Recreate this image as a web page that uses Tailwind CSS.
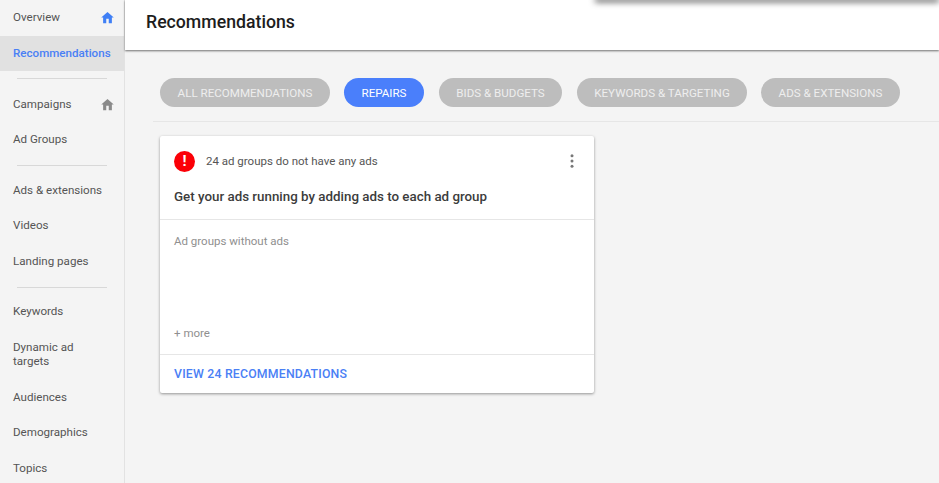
<!DOCTYPE html>
<html lang="en">
  <head>
    <meta charset="UTF-8" />
    <title>Recommendations</title>
    <script src="https://cdn.jsdelivr.net/npm/@tailwindcss/browser@4"></script>
  </head>
  <body class="bg-[#f4f4f4] font-[Roboto,sans-serif] overflow-hidden">
    <div class="flex h-[483px] w-[939px] overflow-hidden">
      <!-- Sidebar -->
      <nav class="w-[125px] shrink-0 h-full border-r border-[#e2e2e2] text-[11.6px] text-[#555]">
        <div class="h-[36px] flex items-center justify-between pl-[13px] pr-[9.5px] pb-[1px]">
          <span>Overview</span>
          <svg class="w-[15px] h-[15px]" viewBox="0 0 24 24" fill="#3f7ff5"><path d="M10 21v-7h4v7h5v-9h3L12 3 2 12h3v9z" /></svg>
        </div>
        <div class="h-[35px] flex items-center pl-[13px] bg-[#e1e1e1] text-[#4a80f5] font-medium">Recommendations</div>
        <div class="mx-[17px] mt-[7px] border-t border-[#d8d8d8]"></div>
        <div class="h-[36px] mt-[7px] pt-[1px] flex items-center justify-between pl-[13px] pr-[9.5px]">
          <span>Campaigns</span>
          <svg class="w-[15px] h-[15px]" viewBox="0 0 24 24" fill="#8a8a8a"><path d="M10 21v-7h4v7h5v-9h3L12 3 2 12h3v9z" /></svg>
        </div>
        <div class="h-[35px] flex items-center pl-[13px]">Ad Groups</div>
        <div class="mx-[17px] mt-[8px] border-t border-[#d8d8d8]"></div>
        <div class="h-[36px] mt-[6px] pt-[1px] flex items-center pl-[13px]">Ads &amp; extensions</div>
        <div class="h-[35px] flex items-center pl-[13px]">Videos</div>
        <div class="h-[36px] pt-[1px] flex items-center pl-[13px]">Landing pages</div>
        <div class="mx-[17px] mt-[8px] border-t border-[#d8d8d8]"></div>
        <div class="h-[35px] mt-[6px] flex items-center pl-[13px]">Keywords</div>
        <div class="h-[50px] flex items-center pl-[13px] leading-[14.5px]">Dynamic ad<br />targets</div>
        <div class="h-[36px] pt-[1px] flex items-center pl-[13px]">Audiences</div>
        <div class="h-[35px] flex items-center pl-[13px]">Demographics</div>
        <div class="h-[36px] pt-[1px] flex items-center pl-[13px]">Topics</div>
      </nav>

      <main class="flex-1 min-w-0 relative">
        <!-- Header -->
        <header class="h-[50px] bg-white shadow-[0_1px_2px_rgba(0,0,0,0.55)] flex items-center pl-[21px] pb-[6px] text-[17.7px] font-medium text-[#1d1d1d]">Recommendations</header>
        <div class="absolute top-[-4px] left-[470px] right-0 h-[4px] shadow-[0_2px_6px_rgba(0,0,0,0.7)]"></div>

        <!-- Filter chips -->
        <div class="ml-[28px] mt-[28px] pl-[7px] h-[44px] border-b border-[#e6e6e6] flex gap-[15px] text-[11.6px] text-[#eeeeee]">
          <span class="h-[29px] w-[170px] pt-[2px] rounded-full bg-[#bdbdbd] flex items-center justify-center">ALL RECOMMENDATIONS</span>
          <span class="h-[29px] w-[80px] pt-[2px] -ml-[1px] rounded-full bg-[#4a7ffb] text-white flex items-center justify-center">REPAIRS</span>
          <span class="h-[29px] w-[123px] pt-[2px] rounded-full bg-[#bdbdbd] flex items-center justify-center">BIDS &amp; BUDGETS</span>
          <span class="h-[29px] w-[170px] pt-[2px] rounded-full bg-[#bdbdbd] flex items-center justify-center">KEYWORDS &amp; TARGETING</span>
          <span class="h-[29px] w-[139px] pt-[2px] -ml-[1px] rounded-full bg-[#bdbdbd] flex items-center justify-center">ADS &amp; EXTENSIONS</span>
        </div>

        <!-- Card -->
        <section class="ml-[35px] mt-[14px] w-[434px] h-[257px] bg-white rounded-[2px] shadow-[0_1px_3px_rgba(0,0,0,0.4)] flex flex-col">
          <div class="h-[84px] border-b border-[#e6e6e6] px-[14px] pt-[14px]">
            <div class="flex items-center h-[22px]">
              <span class="w-[21px] h-[21px] rounded-full bg-[#fb0007] text-white flex items-center justify-center text-[15px] font-bold leading-none">!</span>
              <span class="ml-[11px] mt-[1px] text-[11.5px] text-[#555]">24 ad groups do not have any ads</span>
              <svg class="ml-auto mr-[6px] w-[4px] h-[14px]" viewBox="0 0 4 14" fill="#777"><circle cx="2" cy="1.7" r="1.5" /><circle cx="2" cy="7" r="1.5" /><circle cx="2" cy="12.3" r="1.5" /></svg>
            </div>
            <p class="mt-[15px] text-[13.35px] font-medium text-[#3c3c3c]">Get your ads running by adding ads to each ad group</p>
          </div>
          <div class="flex-1 px-[14px] pt-[13px] pb-[12px] flex flex-col justify-between border-b border-[#e6e6e6] text-[11.5px] text-[#8f8f8f]">
            <span>Ad groups without ads</span>
            <span>+ more</span>
          </div>
          <div class="h-[38px] pt-[1px] flex items-center px-[14px] text-[12.3px] font-medium text-[#4a80f5] tracking-[0.2px]">VIEW 24 RECOMMENDATIONS</div>
        </section>
      </main>
    </div>
  </body>
</html>
